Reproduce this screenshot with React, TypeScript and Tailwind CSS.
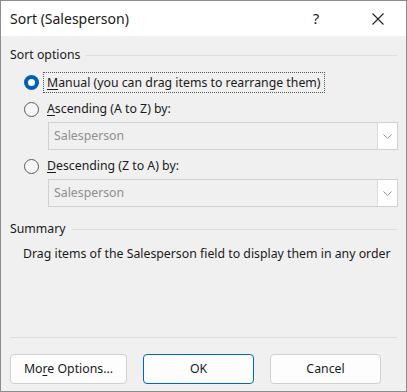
import React from "react";

function Radio({ checked }: { checked?: boolean }) {
  if (checked) {
    return (
      <span className="w-[15px] h-[15px] rounded-full bg-[#005fb8] flex items-center justify-center shrink-0">
        <span className="w-[7px] h-[7px] rounded-full bg-white" />
      </span>
    );
  }
  return <span className="w-[15px] h-[15px] rounded-full border border-[#5a5a5a] bg-[#f7f7f7] shrink-0" />;
}

function Chevron() {
  return (
    <svg width="9" height="5" viewBox="0 0 9 5" fill="none">
      <path d="M0.5 0.5l4 4 4-4" stroke="#909090" strokeWidth="1" />
    </svg>
  );
}

function Dropdown() {
  return (
    <div className="ml-[38px] h-[28px] border border-[#d0d0d0] bg-[#f0f0f0] flex items-center">
      <span className="flex-1 pl-[5px] text-[#8f8f8f]">Salesperson</span>
      <span className="w-[20px] h-full bg-white border-l border-[#dcdcdc] flex items-center justify-center">
        <Chevron />
      </span>
    </div>
  );
}

export default function App() {
  return (
    <div
      className="w-[407px] h-[392px] border border-[#8c8c8c] flex flex-col text-[12.3px] text-[#1a1a1a]"
      style={{ fontFamily: '"Noto Sans", "Open Sans", sans-serif' }}
    >
      <div className="h-[35px] bg-white flex items-center pl-[9px] shrink-0">
        <span className="text-[14px] flex-1">Sort (Salesperson)</span>
        <span className="text-[15px] w-[20px] mr-[46px] text-center">?</span>
        <svg width="12" height="12" viewBox="0 0 12 12" className="mr-[22px]">
          <path d="M0.5 0.5l11 11M11.5 0.5L0.5 11.5" stroke="#222" strokeWidth="1.1" />
        </svg>
      </div>
      <div className="flex-1 bg-[#f0f0f0] px-[9px] flex flex-col">
        <div className="flex items-center mt-[10px] h-[18px]">
          <span>Sort options</span>
          <span className="flex-1 h-px bg-[#dedede] ml-[6px]" />
        </div>
        <div className="flex items-center mt-[7px] ml-[14px] h-[22px]">
          <Radio checked />
          <span className="ml-[4px] px-[3px] border border-dotted border-[#555] leading-[19px]">
            <u className="decoration-1 underline-offset-2">M</u>anual (you can drag items to rearrange them)
          </span>
        </div>
        <div className="flex items-center mt-[5px] ml-[14px] h-[22px]">
          <Radio />
          <span className="ml-[8px]">
            <u className="underline-offset-2">A</u>scending (A to Z) by:
          </span>
        </div>
        <div className="mt-[2px] mr-[-1px]">
          <Dropdown />
        </div>
        <div className="flex items-center mt-[5px] ml-[14px] h-[22px]">
          <Radio />
          <span className="ml-[8px]">
            <u className="underline-offset-2">D</u>escending (Z to A) by:
          </span>
        </div>
        <div className="mt-[2px] mr-[-1px]">
          <Dropdown />
        </div>
        <div className="flex items-center mt-[13px] h-[18px]">
          <span>Summary</span>
          <span className="flex-1 h-px bg-[#dedede] ml-[6px]" />
        </div>
        <div className="mt-[7px] ml-[13px] whitespace-nowrap">
          Drag items of the Salesperson field to display them in any order
        </div>
        <div className="flex-1" />
        <div className="h-px bg-[#dedede]" />
        <div className="flex gap-[16px] mt-[16px] mb-[7px]">
          <button className="w-[117px] h-[30px] bg-[#fdfdfd] border border-[#d0d0d0] rounded-[4px]">
            Mo<u className="underline-offset-2">r</u>e Options...
          </button>
          <button className="w-[111px] h-[30px] bg-[#fdfdfd] border border-[#0067c0] rounded-[4px]">
            OK
          </button>
          <button className="w-[111px] h-[30px] bg-[#fdfdfd] border border-[#d0d0d0] rounded-[4px]">
            Cancel
          </button>
        </div>
      </div>
    </div>
  );
}
